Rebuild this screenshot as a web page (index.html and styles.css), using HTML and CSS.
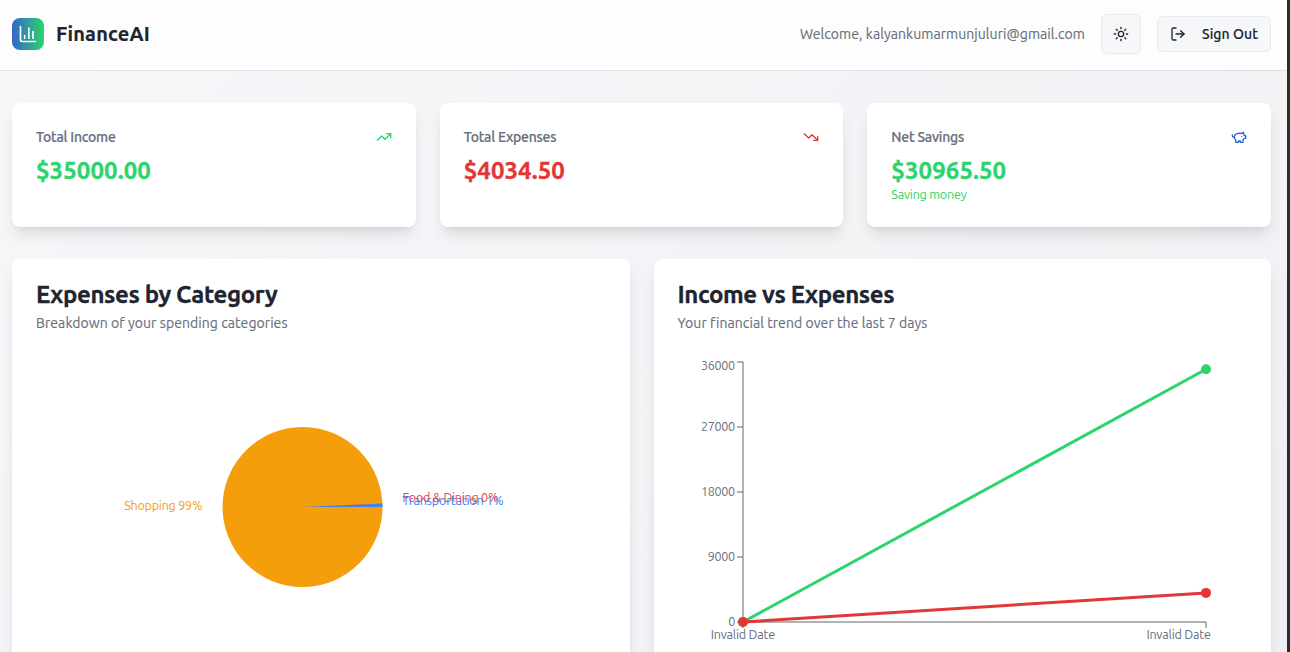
FILE: index.html
```html
<!DOCTYPE html>
<html lang="en">
<head>
<meta charset="utf-8">
<title>FinanceAI</title>
<link rel="stylesheet" href="styles.css">
</head>
<body>
<div class="page">
  <header class="header">
    <div class="brand">
      <div class="logo">
        <svg width="20" height="20" viewBox="0 0 24 24" class="icon"><path d="M3 3v16a2 2 0 0 0 2 2h16"/><path d="M18 17V9"/><path d="M13 17V5"/><path d="M8 17v-3"/></svg>
      </div>
      <h1 class="brand-name">FinanceAI</h1>
    </div>
    <div class="actions">
      <span class="welcome">Welcome, kalyankumarmunjuluri@gmail.com</span>
      <button class="btn btn-icon" aria-label="Theme">
        <svg width="16" height="16" viewBox="0 0 24 24" class="icon"><circle cx="12" cy="12" r="4"/><path d="M12 2v2"/><path d="M12 20v2"/><path d="m4.93 4.93 1.41 1.41"/><path d="m17.66 17.66 1.41 1.41"/><path d="M2 12h2"/><path d="M20 12h2"/><path d="m6.34 17.66-1.41 1.41"/><path d="m19.07 4.93-1.41 1.41"/></svg>
      </button>
      <button class="btn btn-out">
        <svg width="16" height="16" viewBox="0 0 24 24" class="icon"><path d="M9 21H5a2 2 0 0 1-2-2V5a2 2 0 0 1 2-2h4"/><path d="m16 17 5-5-5-5"/><path d="M21 12H9"/></svg>
        <span>Sign Out</span>
      </button>
    </div>
  </header>

  <main class="main">
    <section class="summary">
      <article class="card stat">
        <div class="stat-head">
          <h3 class="stat-title">Total Income</h3>
          <svg width="16" height="16" viewBox="0 0 24 24" class="icon income"><path d="M22 7 13.5 15.5l-5-5L2 17"/><path d="M16 7h6v6"/></svg>
        </div>
        <div class="stat-value income">$35000.00</div>
      </article>
      <article class="card stat">
        <div class="stat-head">
          <h3 class="stat-title">Total Expenses</h3>
          <svg width="16" height="16" viewBox="0 0 24 24" class="icon expense"><path d="m22 17-8.5-8.5-5 5L2 7"/><path d="M16 17h6v-6"/></svg>
        </div>
        <div class="stat-value expense">$4034.50</div>
      </article>
      <article class="card stat">
        <div class="stat-head">
          <h3 class="stat-title">Net Savings</h3>
          <svg width="16" height="16" viewBox="0 0 24 24" class="icon savings"><path d="M19 5c-1.5 0-2.8 1.4-3 2-3.5-1.5-11-.3-11 5 0 1.8 0 3 2 4.5V20h4v-2h3v2h4v-4c1-.5 1.7-1 2-2h2v-4h-2c0-1-.5-1.5-1-2V5z"/><path d="M2 9v1c0 1.1.9 2 2 2h1"/><path d="M16 11h.01"/></svg>
        </div>
        <div class="stat-value income">$30965.50</div>
        <p class="stat-note">Saving money</p>
      </article>
    </section>

    <section class="charts">
      <article class="card chart-card">
        <h2 class="chart-title">Expenses by Category</h2>
        <p class="chart-sub">Breakdown of your spending categories</p>
        <svg class="chart" width="533" height="300" viewBox="0 0 533 300">
          <circle cx="266.5" cy="150" r="80" fill="#f59e0b"/>
          <path d="M266.5 150 L346.42 146.4 A80 80 0 0 1 346.44 146.9 Z" fill="#ef4444"/>
          <path d="M266.5 150 L346.44 146.8 A80 80 0 0 1 346.5 150 Z" fill="#3b82f6"/>
          <text x="88.2" y="153" textLength="78.3" fill="#f59e0b">Shopping 99%</text>
          <text x="366.5" y="148" textLength="101" fill="#3b82f6">Transportation 1%</text>
          <text x="366.5" y="145" textLength="96" fill="#ef4444">Food &amp; Dining 0%</text>
        </svg>
      </article>
      <article class="card chart-card">
        <h2 class="chart-title">Income vs Expenses</h2>
        <p class="chart-sub">Your financial trend over the last 7 days</p>
        <svg class="chart" width="533" height="300" viewBox="0 0 533 300">
          <g class="axis">
            <path d="M65 265H528"/><path d="M65 265v6"/><path d="M528 265v6"/>
            <path d="M65 5V265"/><path d="M59 265h6"/><path d="M59 200h6"/><path d="M59 135h6"/><path d="M59 70h6"/><path d="M59 5h6"/>
          </g>
          <g class="ticks">
            <text x="50.2" y="269" textLength="6.8">0</text>
            <text x="29.8" y="204" textLength="27.2">9000</text>
            <text x="23" y="139" textLength="34">18000</text>
            <text x="23" y="74" textLength="34">27000</text>
            <text x="23" y="13" textLength="34">36000</text>
            <text x="32.7" y="282" textLength="64.5">Invalid Date</text>
            <text x="468.4" y="282" textLength="64.5">Invalid Date</text>
          </g>
          <path class="line income" d="M65 265 528 12.2"/>
          <circle class="dot income" cx="65" cy="265" r="5"/><circle class="dot income" cx="528" cy="12.2" r="5"/>
          <path class="line expense" d="M65 265 528 235.9"/>
          <circle class="dot expense" cx="65" cy="265" r="5"/><circle class="dot expense" cx="528" cy="235.9" r="5"/>
        </svg>
      </article>
    </section>
  </main>
</div>
<div class="scroll-edge"></div>
</body>
</html>
```
FILE: styles.css
```css
* { box-sizing: border-box; margin: 0; padding: 0; }

body {
  display: grid;
  grid-template-columns: 1fr 3px;
  height: 652px;
  overflow: hidden;
  font-family: Ubuntu, "Noto Sans", sans-serif;
  font-size: 14px;
  line-height: 20px;
  color: #20242f;
}

.page { height: 652px; overflow: hidden; background: linear-gradient(135deg, #f6f7f9, #eff0f3); }
.scroll-edge { background: #2c2c2c; }

.icon { fill: none; stroke: currentColor; stroke-width: 2; stroke-linecap: round; stroke-linejoin: round; flex: none; }
.income { color: #2dd36b; }
.expense { color: #e33636; }
.savings { color: #2f62cf; }

.header {
  display: flex;
  align-items: center;
  justify-content: space-between;
  height: 71px;
  padding: 0 16px 3px 12px;
  background: #fdfdfd;
  border-bottom: 1px solid #dfe1e6;
}
.brand { display: flex; align-items: center; gap: 12px; }
.logo {
  display: flex;
  align-items: center;
  justify-content: center;
  width: 32px;
  height: 32px;
  border-radius: 8px;
  color: #fff;
  background: linear-gradient(90deg, #3366cc, #2dd36b);
}
.brand-name { font-size: 20px; line-height: 28px; font-weight: 700; letter-spacing: 0.2px; -webkit-text-stroke: 0.2px; }
.actions { display: flex; align-items: center; gap: 16px; }
.welcome { color: #686f7e; letter-spacing: 0.068px; -webkit-text-stroke: 0.15px; }

.btn {
  display: flex;
  align-items: center;
  justify-content: center;
  font: inherit;
  font-weight: 500;
  color: inherit;
  background: #f6f7f9;
  border: 1px solid #e7e9ee;
  border-radius: 6px;
}
.btn-icon { width: 40px; height: 40px; }
.btn-out { width: 114px; height: 36px; gap: 16px; letter-spacing: 0.07px; -webkit-text-stroke: 0.15px; }

.main { display: grid; gap: 32px; padding: 32px 16px 0 12px; }
.summary { display: grid; grid-template-columns: repeat(3, 1fr); gap: 24px; }
.charts { display: grid; grid-template-columns: repeat(2, 1fr); gap: 24px; }
.card {
  background: #fff;
  border-radius: 8px;
  padding: 24px;
  box-shadow: 0 10px 15px -3px rgba(0, 0, 0, 0.1), 0 4px 6px -4px rgba(0, 0, 0, 0.1);
}

.stat { height: 124px; }
.stat-head { display: flex; align-items: center; justify-content: space-between; padding-bottom: 8px; }
.stat-title { font-size: 14px; font-weight: 500; letter-spacing: -0.24px; color: #686f7e; -webkit-text-stroke: 0.2px; }
.stat-value { font-size: 24px; line-height: 32px; font-weight: 700; letter-spacing: 0.08px; -webkit-text-stroke: 0.3px; }
.stat-note { font-size: 12.6px; line-height: 14px; letter-spacing: -0.24px; color: #2dd36b; }

.chart-card { height: 422px; }
.chart-title { font-size: 24px; line-height: 24px; font-weight: 700; letter-spacing: -0.38px; -webkit-text-stroke: 0.3px; }
.chart-sub { margin-top: 6px; letter-spacing: 0.07px; color: #686f7e; -webkit-text-stroke: 0.15px; }
.chart { display: block; margin-top: 24px; font-size: 12.6px; overflow: visible; }
.axis { stroke: #666; stroke-width: 1; fill: none; }
.ticks { fill: #686f7e; }
.line { fill: none; stroke: currentColor; stroke-width: 3; }
.dot { fill: currentColor; }
```
